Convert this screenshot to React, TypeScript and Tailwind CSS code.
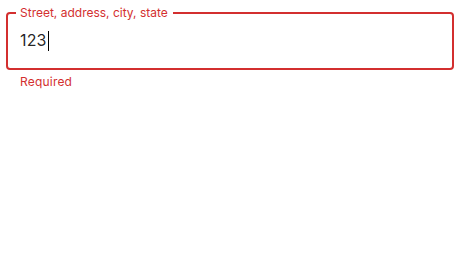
export default function App() {
  return (
    <div className="min-h-screen bg-white font-['Inter','Noto_Sans',sans-serif]">
      <div className="ml-[6px] w-[448px] pt-[5px]">
        <fieldset className="m-0 rounded-[4px] border-2 border-[#d32f2f] px-[8px] pt-[8px] pb-[16px]">
          <legend className="pl-[4px] pr-[5px] text-[12px] leading-[16px] text-[#d32f2f]">
            Street, address, city, state
          </legend>
          <div className="flex items-center pl-[4px] text-[16px] leading-[23px] tracking-[0.15px] text-[rgba(0,0,0,0.87)]">
            <span>123</span>
            <span className="ml-[1px] h-[20px] w-px bg-black" />
          </div>
        </fieldset>
        <p className="mt-[2px] ml-[14px] text-[12px] leading-[20px] tracking-[0.2px] text-[#d32f2f]">
          Required
        </p>
      </div>
    </div>
  );
}
